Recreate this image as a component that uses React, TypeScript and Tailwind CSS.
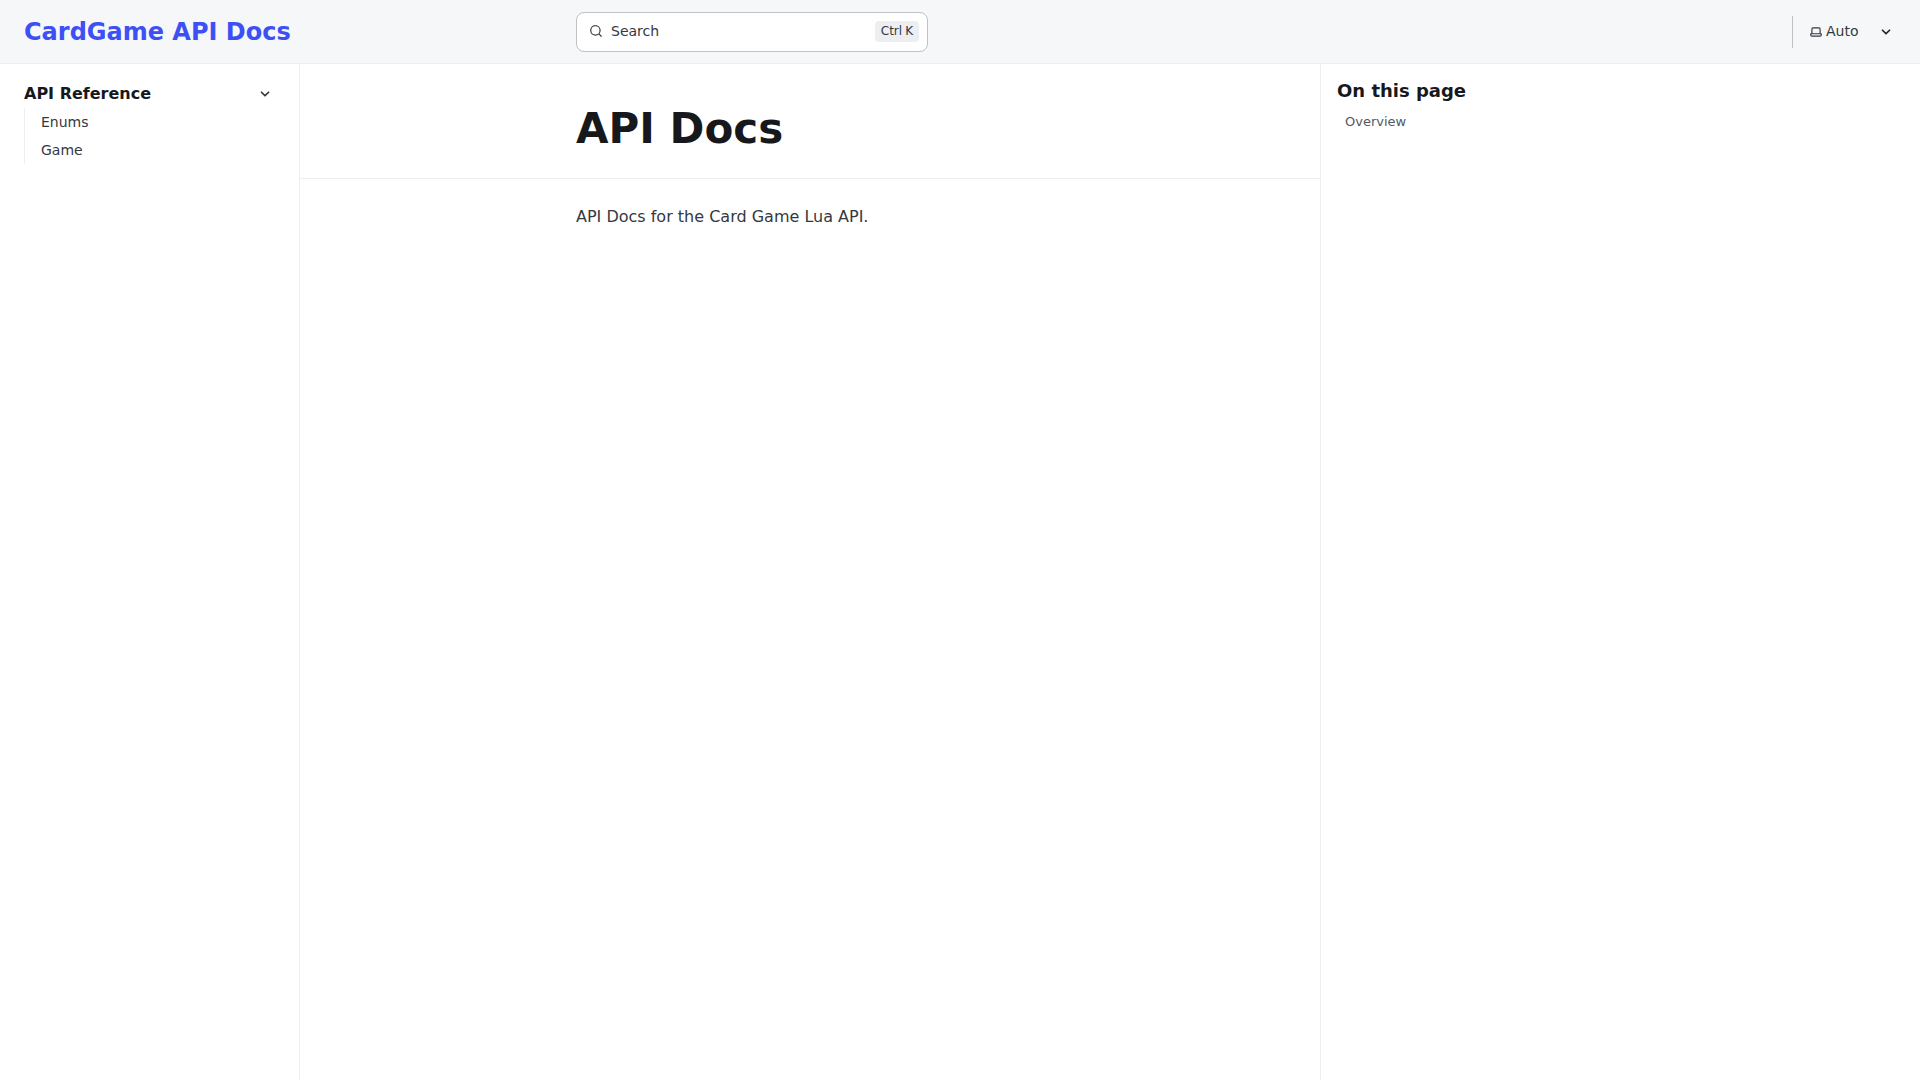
type IconProps = { d: string; className: string };

const MAGNIFIER =
  'M21.71 20.29 18 16.61A9 9 0 1 0 16.61 18l3.68 3.68a.999.999 0 0 0 1.42 0 1 1 0 0 0 0-1.39ZM11 18a7 7 0 1 1 0-14 7 7 0 0 1 0 14Z';
const CARET =
  'M17 9.17a1 1 0 0 0-1.41 0L12 12.71 8.46 9.17a1 1 0 1 0-1.41 1.42l4.24 4.24a1.002 1.002 0 0 0 1.42 0L17 10.59a1.002 1.002 0 0 0 0-1.42Z';
const LAPTOP =
  'M21 14h-1V7a3 3 0 0 0-3-3H7a3 3 0 0 0-3 3v7H3a1 1 0 0 0-1 1v2a3 3 0 0 0 3 3h14a3 3 0 0 0 3-3v-2a1 1 0 0 0-1-1ZM6 7a1 1 0 0 1 1-1h10a1 1 0 0 1 1 1v7H6V7Zm14 10a1 1 0 0 1-1 1H5a1 1 0 0 1-1-1v-1h16v1Z';

function Icon({ d, className }: IconProps) {
  return (
    <svg viewBox="0 0 24 24" fill="currentColor" aria-hidden="true" className={className}>
      <path fillRule="evenodd" d={d} />
    </svg>
  );
}

function ThemeSelect() {
  return (
    <label
      aria-label="Select theme"
      className="relative flex h-8 items-center border-l border-[#c0c2c7] pl-4 text-[#353841]"
    >
      <Icon d={LAPTOP} className="pointer-events-none absolute left-4 size-[14px]" />
      <select
        aria-label="Select theme"
        defaultValue="auto"
        className="h-8 w-[87px] cursor-pointer appearance-none bg-transparent pb-[2px] pl-[17px] text-sm"
      >
        <option value="dark">Dark</option>
        <option value="light">Light</option>
        <option value="auto">Auto</option>
      </select>
      <Icon d={CARET} className="pointer-events-none absolute right-0 size-5 text-[#23262f]" />
    </label>
  );
}

function Header() {
  return (
    <header className="flex h-16 shrink-0 items-center border-b border-[#eceef2] bg-[#f6f7f9] pr-6">
      <div className="w-[calc(50vw-384px)] shrink-0 pl-6">
        <a href="#" className="text-2xl font-semibold whitespace-nowrap text-[#3d50f5]">
          CardGame API Docs
        </a>
      </div>
      <button
        type="button"
        className="flex h-10 w-[352px] cursor-pointer items-center gap-2 rounded-lg border border-[#c0c2c7] bg-white pr-2 pb-px pl-3 text-sm leading-[21px] text-[#353841]"
      >
        <Icon d={MAGNIFIER} className="size-[14px]" />
        <span>Search</span>
        <kbd className="ml-auto flex gap-[3px] rounded bg-[#eceef2] px-1.5 font-[inherit] text-xs leading-[21px]">
          <span>Ctrl</span>
          <span>K</span>
        </kbd>
      </button>
      <div className="ml-auto">
        <ThemeSelect />
      </div>
    </header>
  );
}

function Sidebar() {
  return (
    <nav aria-label="Main" className="w-[300px] shrink-0 border-r border-[#eceef2] px-6 pt-4">
      <details open>
        <summary className="flex cursor-pointer list-none items-center justify-between py-[3px] font-semibold leading-[22px] text-[#17181c]">
          <span>API Reference</span>
          <Icon d={CARET} className="size-5 text-[#353841]" />
        </summary>
        <ul className="border-l border-[#eceef2] pl-4 text-sm leading-7 text-[#353841]">
          <li>
            <a href="#enums" className="block">Enums</a>
          </li>
          <li>
            <a href="#game" className="block">Game</a>
          </li>
        </ul>
      </details>
    </nav>
  );
}

export default function App() {
  return (
    <div className="flex min-h-screen flex-col bg-white font-['DejaVu_Sans',sans-serif] text-[#353841]">
      <Header />
      <div className="flex grow">
        <Sidebar />
        <main className="grow basis-[720px]">
          <div className="border-b border-[#eceef2] px-6 pt-10 pb-6">
            <h1
              id="overview"
              className="ml-auto max-w-[720px] text-[42px] leading-[50px] font-semibold text-[#17181c]"
            >
              API Docs
            </h1>
          </div>
          <div className="px-6 py-6">
            <p className="ml-auto max-w-[720px] leading-7">API Docs for the Card Game Lua API.</p>
          </div>
        </main>
        <aside className="grow basis-[300px] border-l border-[#eceef2] px-4 pt-4">
          <h2 className="text-lg leading-[22px] font-semibold text-[#17181c]">On this page</h2>
          <ul className="mt-2 px-2 text-[13px] leading-6 text-[#545861]">
            <li>
              <a href="#overview">Overview</a>
            </li>
          </ul>
        </aside>
      </div>
    </div>
  );
}
